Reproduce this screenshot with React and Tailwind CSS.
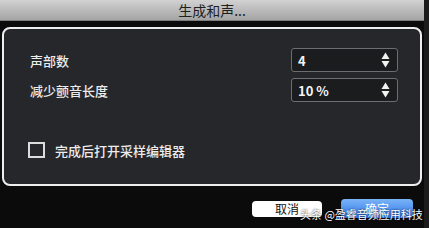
import React from "react";

const cjk = { fontFamily: '"Noto Sans CJK SC", "Noto Sans", sans-serif' };

function Arrows() {
  return (
    <svg width="9" height="16" viewBox="0 0 9 16" className="shrink-0">
      <polygon points="4.5,0.5 8.5,7 0.5,7" fill="#f2f2f2" />
      <polygon points="0.5,9 8.5,9 4.5,15.5" fill="#f2f2f2" />
    </svg>
  );
}

function Spin({ value }) {
  return (
    <div className="flex items-center justify-between w-[107px] h-[24px] pl-[6px] pr-[7px] rounded-[3px] border border-[#6b6d70] bg-[#1b1c1e]">
      <span className="text-[13px] font-semibold text-[#f4f4f4] leading-none">{value}</span>
      <Arrows />
    </div>
  );
}

export default function App() {
  return (
    <div className="relative flex w-[429px] h-[228px] overflow-hidden bg-[#0b0b0b] select-none" style={cjk}>
      <div className="flex flex-col w-[424px]">
        <div className="flex items-center justify-center h-[21px] bg-gradient-to-b from-[#d2d2d2] to-[#a4a4a4] border-b border-[#7d7d7d]">
          <span className="text-[14px] text-[#1e1e1e] leading-none">生成和声...</span>
        </div>

        <div className="mt-[6px] ml-[2px] w-[420px] h-[159px] rounded-[8px] border-2 border-[#eeeeee] bg-[#25272a] pl-[26px] pr-[22px] pt-[19px]">
          <div className="flex flex-col gap-[6px]">
            <div className="flex items-center justify-between">
              <span className="text-[13px] font-medium text-[#ececec] leading-none">声部数</span>
              <Spin value="4" />
            </div>
            <div className="flex items-center justify-between">
              <span className="text-[13px] font-medium text-[#ececec] leading-none">减少颤音长度</span>
              <Spin value="10 %" />
            </div>
          </div>
          <div className="flex items-center gap-[10px] mt-[40px] -ml-[2px]">
            <div className="w-[17px] h-[16px] border-2 border-[#dcdcdc] bg-[#25272a]" />
            <span className="text-[13px] font-medium text-[#ececec] leading-none">完成后打开采样编辑器</span>
          </div>
        </div>

        <div className="flex items-center justify-end gap-[19px] pr-[11px] mt-[13px]">
          <div className="flex items-center justify-center w-[70px] h-[16px] rounded-[4px] bg-white">
            <span className="text-[12px] text-[#111] leading-none">取消</span>
          </div>
          <div className="flex items-center justify-center w-[72px] h-[19px] rounded-[4px] bg-gradient-to-b from-[#7ab4f7] to-[#2f74e6]">
            <span className="text-[12px] text-white leading-none">确定</span>
          </div>
        </div>
      </div>
      <div className="w-[5px] h-full bg-[#1c1c1c]" />

      <span className="absolute left-[300px] top-[209px] whitespace-nowrap text-[11px] text-white leading-none [text-shadow:0_0_2px_rgba(0,0,0,0.9)]">
        头条 @盈睿音频应用科技
      </span>
    </div>
  );
}
